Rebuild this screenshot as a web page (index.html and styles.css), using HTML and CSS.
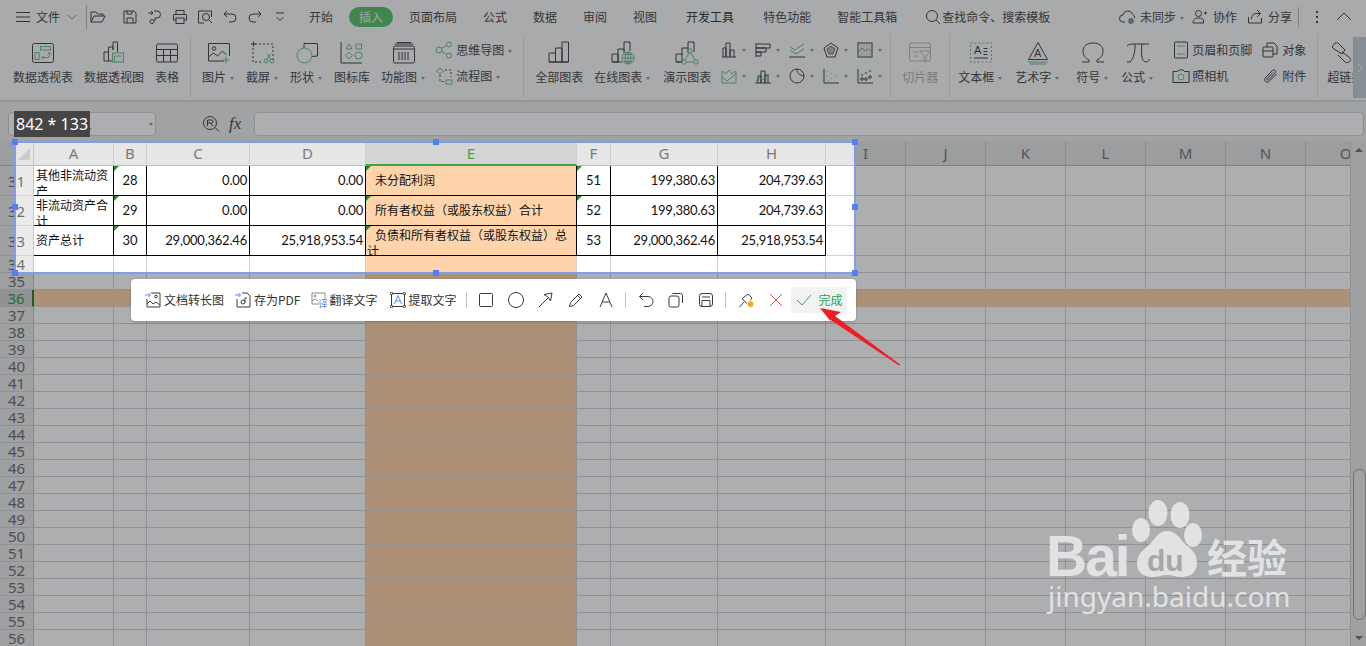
FILE: index.html
```html
<!DOCTYPE html>
<html lang="zh-CN">
<head>
<meta charset="utf-8">
<title>WPS 表格</title>
<link rel="stylesheet" href="styles.css">
</head>
<body>
<div class="app">
  <header class="topbar">
    <svg class="s16 menu" viewBox="0 0 16 16"><path d="M1 3.500h14M1 8h14M1 12.500h14"/></svg>
    <span class="file">文件</span>
    <svg class="s10 chev" viewBox="0 0 10 10"><path d="M1 3l4 4 4-4"/></svg>
    <span class="vsep"></span>
    <div class="quick">
      <svg class="s16" viewBox="0 0 16 16"><path d="M1 13V3h5l1.500 2H13v2M1 13l3-6h11l-3 6z"/></svg>
      <svg class="s16" viewBox="0 0 16 16"><path d="M2 2h10l2 2v10H2zM5 14V9h6v5M5 2v3h5V2"/></svg>
      <svg class="s16" viewBox="0 0 16 16"><path d="M1 4h5M4 2l2 2-2 2M7 2h3a3.500 3.500 0 0 1 0 7H8v3"/><circle cx="5" cy="12.500" r="2"/></svg>
      <svg class="s16" viewBox="0 0 16 16"><rect x="4" y="1.500" width="8" height="4"/><path d="M4 11H1.500V5.500h13V11H12"/><rect x="4" y="9" width="8" height="5.500"/></svg>
      <svg class="s16" viewBox="0 0 16 16"><path d="M7 14H1.500V2h13v6"/><circle cx="9" cy="8" r="3.500"/><path d="M11.500 10.500L15 14"/></svg>
      <svg class="s16" viewBox="0 0 16 16"><path d="M5 2L2 5l3 3M2 5h8a3.500 3.500 0 0 1 0 8H7"/></svg>
      <svg class="s16" viewBox="0 0 16 16"><path d="M11 2l3 3-3 3M14 5H6a3.500 3.500 0 0 0 0 8h3"/></svg>
      <svg class="s16" viewBox="0 0 16 16"><path d="M4 4h8M4.500 8L8 11.500 11.500 8"/></svg>
    </div>
    <nav class="tabs">
      <span>开始</span><span class="pill">插入</span><span>页面布局</span><span>公式</span><span>数据</span><span>审阅</span><span>视图</span><span class="m3 dark">开发工具</span><span class="m3">特色功能</span><span>智能工具箱</span>
    </nav>
    <div class="search">
      <svg class="s16" viewBox="0 0 16 16"><circle cx="7" cy="7" r="5.500"/><path d="M11 11l4 4"/></svg>
      <span>查找命令、搜索模板</span>
    </div>
    <div class="account">
      <svg class="s16 w17" viewBox="0 0 17 16"><path d="M6 13H4a3.500 3.500 0 0 1 0-7 5 5 0 0 1 9.500-1 4 4 0 0 1 2 4"/><circle class="solid" cx="12" cy="12" r="3.500"/></svg>
      <span class="acct-t sync">未同步<i class="cr"></i></span>
      <svg class="s16 mr5" viewBox="0 0 16 16"><circle cx="6.500" cy="4.500" r="3"/><path d="M1 14c0-4 3-5 5.500-5s4 .5 5 2v3zM12 4h3M13.500 2.500v3"/></svg>
      <span class="acct-t gap11">协作</span>
      <svg class="s16 mr5" viewBox="0 0 16 16"><path d="M1.500 8v6h13V9M10 1l3.500 3.500L10 8M13 4.500H9C6 4.500 4.500 7 4.500 10"/></svg>
      <span class="acct-t">分享</span>
      <span class="vsep short"></span>
      <span class="dots"><i></i><i></i><i></i></span>
      <svg class="s16 up" viewBox="0 0 16 16"><path d="M1 11l7-7 7 7"/></svg>
    </div>
  </header>

  <section class="ribbon">
    <div class="big"><svg class="s24" viewBox="0 0 24 24"><rect x="1.500" y="2.500" width="21" height="19" rx="2"/><rect class="g" x="9.500" y="5.500" width="10" height="3.500"/><rect class="g" x="4" y="11.500" width="4" height="7"/><path class="g" d="M11 16.500h5.500a2 2 0 0 0 2-2V12M16.500 13.500l2-2 2 2M12.500 15l-1.500 1.500 1.500 1.500"/></svg><span>数据透视表</span></div>
    <div class="big"><svg class="s24" viewBox="0 0 24 24"><path d="M2 20V11h4.500v9zM6.500 20V6H11v3M11 9V1h4.500v10"/><rect class="g" x="10.500" y="12" width="11" height="9"/><path class="g" d="M12.500 21v-6h7"/><path d="M6.500 20H10"/></svg><span>数据透视图</span></div>
    <div class="big"><svg class="s24" viewBox="0 0 24 24"><rect x="1.500" y="3" width="21" height="18" rx="1.500"/><path d="M1.500 8.500h21M1.500 14.500h21M8.500 8.500V21M15.500 8.500V21"/></svg><span>表格</span></div>
    <span class="rsep"></span>
    <div class="big"><svg class="s24" viewBox="0 0 24 24"><path d="M17 20H1.500V2.500h21V15"/><circle cx="7" cy="7.500" r="1.800"/><path d="M1.500 16l5-4 4 3 5-5 4 4"/><path class="g" d="M19 15.500v7M15.500 19h7"/></svg><span>图片<i class="cr"></i></span></div>
    <div class="big"><svg class="s24" viewBox="0 0 24 24"><path class="dash" d="M4 3h18v16M2 7v14h10"/><path d="M0 3h5M2.500 .5v5"/><circle class="g" cx="15" cy="20" r="2"/><circle class="g" cx="21" cy="20" r="2"/><path class="g" d="M16 18.500l4-6M20 18.500l-4-6"/></svg><span>截屏<i class="cr"></i></span></div>
    <div class="big"><svg class="s24" viewBox="0 0 24 24"><path d="M9 2.500h13.500V15l-5.500 .5"/><path d="M9 2.500V7"/><circle class="g" cx="9.500" cy="14.500" r="7.500"/></svg><span>形状<i class="cr"></i></span></div>
    <div class="big"><svg class="s24" viewBox="0 0 24 24"><path d="M1 1v21h21"/><path class="g" d="M9 3l3 5H6zM16 3h5.500v5H16zM9 11l3.500 3.500L9 18l-3.500-3.500z"/><circle class="g" cx="18.500" cy="14.500" r="3.500"/></svg><span>图标库</span></div>
    <div class="big"><svg class="s24" viewBox="0 0 24 24"><rect x="1.500" y="5" width="21" height="17" rx="1.500"/><path d="M3 3h18M5 1.500h14M1.500 8h21M7 11v8M10 11v8M13 11v8M16 11v8"/></svg><span>功能图<i class="cr"></i></span></div>
    <div class="smalls m-2">
      <div class="sm"><svg class="s18" viewBox="0 0 18 18"><circle class="g" cx="4" cy="9" r="3"/><circle class="g" cx="14" cy="3.500" r="2.500"/><circle class="g" cx="14" cy="14.500" r="2.500"/><path class="g" d="M6.500 7.500l5-3M6.500 10.500l5 3"/></svg><span>思维导图<i class="cr"></i></span></div>
      <div class="sm"><svg class="s18" viewBox="0 0 18 18"><path class="g" d="M5 1l3.500 3L5 7 1.500 4z"/><rect class="g" x="11" y="13" width="6" height="4"/><path class="dash" d="M10 3h6v7M5 8v6.500h5"/></svg><span>流程图<i class="cr"></i></span></div>
    </div>
    <span class="rsep ml7"></span>
    <div class="big"><svg class="s24" viewBox="0 0 24 24"><path d="M2 21v-9h6.500v9zM8.500 21V7H15v14zM15 21V1h6.500v20zM2 21h19.500"/></svg><span>全部图表</span></div>
    <div class="big"><svg class="s24" viewBox="0 0 24 24"><path d="M1 21v-8h6v8zM7 21V8h6v4M13 10V1h6v9M1 21h10"/><circle class="g" cx="17" cy="17" r="6"/><path class="g" d="M11 17h12M17 11v12M13 13.500h8M13 20.500h8M17 11c-4 4-4 8 0 12M17 11c4 4 4 8 0 12"/></svg><span>在线图表<i class="cr"></i></span></div>
    <div class="big ml1"><svg class="s24" viewBox="0 0 24 24"><path d="M1 21v-8h6v8zM7 14V7h6v5M13 7V1h6v10M1 21h5"/><circle class="g" cx="15" cy="10" r="2.200"/><circle class="g" cx="9" cy="21" r="2.200"/><circle class="g" cx="21" cy="21" r="2.200"/><path class="g" d="M14 12l-4 7M16 12l4 7M11 21h8"/></svg><span>演示图表</span></div>
    <div class="charts">
      <div class="ch"><svg class="s16" viewBox="0 0 16 16"><path d="M1 15h14M2 15V6h3v9M5 15V1h4v14M9 15V8h4v7"/></svg><i class="cr"></i></div>
      <div class="ch"><svg class="s16" viewBox="0 0 16 16"><path d="M1 1v14M1 2h14v4H1M1 6h10v4H1M1 10h5v4H1"/></svg><i class="cr"></i></div>
      <div class="ch"><svg class="s16" viewBox="0 0 16 16"><path class="g" d="M1 5l5 3 4-3 5-3M1 8l6 4 8-5"/><path d="M0 15h16"/></svg><i class="cr"></i></div>
      <div class="ch"><svg class="s16" viewBox="0 0 16 16"><path d="M8 1l7 5-3 9H4L1 6z"/><path class="solid-t" d="M8 4l4 3-2 5H6L4 7z"/></svg><i class="cr"></i></div>
      <div class="ch"><svg class="s16" viewBox="0 0 16 16"><rect x="1" y="1" width="14" height="14"/><path class="g" d="M1 10l4-4 3 3 3-2 4 3"/><path class="thin" d="M4 1v14M7 1v14M10 1v14M13 1v14"/></svg><i class="cr"></i></div>
      <div class="ch"><svg class="s16" viewBox="0 0 16 16"><path class="g" d="M1 15V3l4 3 3-4 3 4 4-3v12zM1 9l5 4 9-7"/></svg><i class="cr"></i></div>
      <div class="ch"><svg class="s16" viewBox="0 0 16 16"><path d="M0 15h16M3 15V8h3v7M6 15V3h4v12M10 15V7h3v8"/><path class="g" d="M1 13l4-3 3 2 6-6"/></svg><i class="cr"></i></div>
      <div class="ch"><svg class="s16" viewBox="0 0 16 16"><circle cx="8" cy="8" r="7"/><path d="M8 1c0 4 2 6 7 7"/></svg><i class="cr"></i></div>
      <div class="ch"><svg class="s16" viewBox="0 0 16 16"><path d="M1 1v14h15"/><path class="g dash" d="M4 3v1M4 8v1M8 5v1M8 10v1M12 8v1M5 12v1"/></svg><i class="cr"></i></div>
      <div class="ch"><svg class="s16" viewBox="0 0 16 16"><path d="M1 1v14h15"/><circle class="solid-g" cx="5" cy="7" r="1.300"/><circle class="solid-g" cx="9" cy="5" r="1.300"/><circle class="solid-g" cx="13" cy="3" r="1.300"/><circle cx="5" cy="11" r="1.300"/><circle cx="9" cy="11" r="1.300"/><circle cx="13" cy="9" r="1.300"/></svg><i class="cr"></i></div>
    </div>
    <span class="rsep"></span>
    <div class="big off"><svg class="s24" viewBox="0 0 24 24"><rect x="1.500" y="2" width="21" height="18" rx="1.500"/><path d="M1.500 6.500h21M5 11h6M5 15h5M12 10h10l-4 5v6l-2-1v-5z"/></svg><span>切片器</span></div>
    <span class="rsep"></span>
    <div class="big ml-2b"><svg class="s24" viewBox="0 0 24 24"><rect class="g dash" x="1.500" y="2" width="21" height="19"/><text class="gl" x="5" y="13">A</text><path d="M14.500 7.500h4M14.500 10.500h4M14.500 13.500h4M5 17h14"/></svg><span>文本框<i class="cr"></i></span></div>
    <div class="big ml1"><svg class="s24" viewBox="0 0 24 24"><path d="M12 1.500L2.500 18.500h19z"/><text class="gl" x="8" y="16">A</text><path class="g" d="M2 21h20M4 23h16"/></svg><span>艺术字<i class="cr"></i></span></div>
    <div class="big ml3"><svg class="s24" viewBox="0 0 24 24"><path d="M1 21h7v-2C4 17 2 14 2 10c0-5 4-8 10-8s10 3 10 8c0 4-2 7-6 9v2h7"/></svg><span>符号<i class="cr"></i></span></div>
    <div class="big ml1"><svg class="s24" viewBox="0 0 24 24"><path d="M1 5c2-2 4-2 6-2h16M9 3c0 8-1 14-5 18H1M16 3c-1 8-1 18 4 18 2 0 3-1 3-3"/></svg><span>公式<i class="cr"></i></span></div>
    <div class="smalls ml7b">
      <div class="sm tight"><svg class="s18" viewBox="0 0 18 18"><rect x="2.500" y="1" width="13" height="16" rx="1"/><path class="g" d="M5 5h8M5 13h8"/></svg><span>页眉和页脚</span></div>
      <div class="sm tight"><svg class="s18" viewBox="0 0 18 18"><path d="M1 4.500h4.500L7 3h4l1.500 1.500H17v11H1z"/><circle class="g" cx="9" cy="10" r="3"/></svg><span>照相机</span></div>
    </div>
    <div class="smalls ml-2">
      <div class="sm"><svg class="s16" viewBox="0 0 16 16"><path d="M5 5V1h7l3 3v8h-4"/><rect x="1" y="5" width="10" height="10" rx="1"/><path d="M1 9h10"/></svg><span>对象</span></div>
      <div class="sm"><svg class="s16" viewBox="0 0 16 16"><path d="M14.500 6L7 13.500c-2.200 2.200-6-1.300-3.700-3.700L10.500 2.500c1.700-1.700 4.300 .7 2.600 2.600L6.500 11.700c-1 1-2.300-.3-1.300-1.300L11 4.500"/></svg><span>附件</span></div>
    </div>
    <span class="rsep"></span>
    <div class="big clip"><svg class="s24" viewBox="0 0 24 24"><path d="M2 6l3-4c2-1 3 0 4 1l6 6-3 4-8-5zM12 11l7 5c2 2 2 4 0 5-2 1-3 1-4 0l-7-7"/></svg><span>超链接</span></div>
    <div class="rnext"><svg class="s10" viewBox="0 0 10 10"><path d="M3 1l4 4-4 4"/></svg></div>
  </section>

  <section class="fbar">
    <div class="namebox"><span>E31</span><i class="cr"></i></div>
    <svg class="s18 fx-s" viewBox="0 0 18 18"><circle cx="8" cy="8" r="6.500"/><path d="M5.500 11V5h4a1.500 1.500 0 0 1 0 3h-4M8.500 8l2.500 3M13 12.500l4 4"/></svg>
    <span class="fx">fx</span>
    <div class="finput"></div>
  </section>

  <section class="sheet">
    <div class="grid">
      <div class="row hdr"><b class="rh corner"></b><i>A</i><i>B</i><i>C</i><i>D</i><i>E</i><i>F</i><i>G</i><i>H</i><i>I</i><i>J</i><i>K</i><i>L</i><i>M</i><i>N</i><i>O</i></div>
      <div class="row tall"><b class="rh">31</b><i class="bd top">其他非流动资产</i><i class="bd c tri">28</i><i class="bd n">0.00</i><i class="bd n">0.00</i><i class="bd in tri">未分配利润</i><i class="bd c tri">51</i><i class="bd n">199,380.63</i><i class="bd n">204,739.63</i><i></i><i></i><i></i><i></i><i></i><i></i><i></i></div>
      <div class="row tall"><b class="rh">32</b><i class="bd top">非流动资产合计</i><i class="bd c tri">29</i><i class="bd n">0.00</i><i class="bd n">0.00</i><i class="bd in tri">所有者权益（或股东权益）合计</i><i class="bd c tri">52</i><i class="bd n">199,380.63</i><i class="bd n">204,739.63</i><i></i><i></i><i></i><i></i><i></i><i></i><i></i></div>
      <div class="row tall"><b class="rh">33</b><i class="bd">资产总计</i><i class="bd c tri">30</i><i class="bd n">29,000,362.46</i><i class="bd n">25,918,953.54</i><i class="bd in top tri">负债和所有者权益（或股东权益）总计</i><i class="bd c">53</i><i class="bd n">29,000,362.46</i><i class="bd n">25,918,953.54</i><i></i><i></i><i></i><i></i><i></i><i></i><i></i></div>
      <div class="row"><b class="rh">34</b><i></i><i></i><i></i><i></i><i></i><i></i><i></i><i></i><i></i><i></i><i></i><i></i><i></i><i></i><i></i></div>
      <div class="row"><b class="rh">35</b><i></i><i></i><i></i><i></i><i></i><i></i><i></i><i></i><i></i><i></i><i></i><i></i><i></i><i></i><i></i></div>
      <div class="row hl"><b class="rh">36</b><i></i><i></i><i></i><i></i><i></i><i></i><i></i><i></i><i></i><i></i><i></i><i></i><i></i><i></i><i></i></div>
      <div class="row"><b class="rh">37</b><i></i><i></i><i></i><i></i><i></i><i></i><i></i><i></i><i></i><i></i><i></i><i></i><i></i><i></i><i></i></div>
      <div class="row"><b class="rh">38</b><i></i><i></i><i></i><i></i><i></i><i></i><i></i><i></i><i></i><i></i><i></i><i></i><i></i><i></i><i></i></div>
      <div class="row"><b class="rh">39</b><i></i><i></i><i></i><i></i><i></i><i></i><i></i><i></i><i></i><i></i><i></i><i></i><i></i><i></i><i></i></div>
      <div class="row"><b class="rh">40</b><i></i><i></i><i></i><i></i><i></i><i></i><i></i><i></i><i></i><i></i><i></i><i></i><i></i><i></i><i></i></div>
      <div class="row"><b class="rh">41</b><i></i><i></i><i></i><i></i><i></i><i></i><i></i><i></i><i></i><i></i><i></i><i></i><i></i><i></i><i></i></div>
      <div class="row"><b class="rh">42</b><i></i><i></i><i></i><i></i><i></i><i></i><i></i><i></i><i></i><i></i><i></i><i></i><i></i><i></i><i></i></div>
      <div class="row"><b class="rh">43</b><i></i><i></i><i></i><i></i><i></i><i></i><i></i><i></i><i></i><i></i><i></i><i></i><i></i><i></i><i></i></div>
      <div class="row"><b class="rh">44</b><i></i><i></i><i></i><i></i><i></i><i></i><i></i><i></i><i></i><i></i><i></i><i></i><i></i><i></i><i></i></div>
      <div class="row"><b class="rh">45</b><i></i><i></i><i></i><i></i><i></i><i></i><i></i><i></i><i></i><i></i><i></i><i></i><i></i><i></i><i></i></div>
      <div class="row"><b class="rh">46</b><i></i><i></i><i></i><i></i><i></i><i></i><i></i><i></i><i></i><i></i><i></i><i></i><i></i><i></i><i></i></div>
      <div class="row"><b class="rh">47</b><i></i><i></i><i></i><i></i><i></i><i></i><i></i><i></i><i></i><i></i><i></i><i></i><i></i><i></i><i></i></div>
      <div class="row"><b class="rh">48</b><i></i><i></i><i></i><i></i><i></i><i></i><i></i><i></i><i></i><i></i><i></i><i></i><i></i><i></i><i></i></div>
      <div class="row"><b class="rh">49</b><i></i><i></i><i></i><i></i><i></i><i></i><i></i><i></i><i></i><i></i><i></i><i></i><i></i><i></i><i></i></div>
      <div class="row"><b class="rh">50</b><i></i><i></i><i></i><i></i><i></i><i></i><i></i><i></i><i></i><i></i><i></i><i></i><i></i><i></i><i></i></div>
      <div class="row"><b class="rh">51</b><i></i><i></i><i></i><i></i><i></i><i></i><i></i><i></i><i></i><i></i><i></i><i></i><i></i><i></i><i></i></div>
      <div class="row"><b class="rh">52</b><i></i><i></i><i></i><i></i><i></i><i></i><i></i><i></i><i></i><i></i><i></i><i></i><i></i><i></i><i></i></div>
      <div class="row"><b class="rh">53</b><i></i><i></i><i></i><i></i><i></i><i></i><i></i><i></i><i></i><i></i><i></i><i></i><i></i><i></i><i></i></div>
      <div class="row"><b class="rh">54</b><i></i><i></i><i></i><i></i><i></i><i></i><i></i><i></i><i></i><i></i><i></i><i></i><i></i><i></i><i></i></div>
      <div class="row"><b class="rh">55</b><i></i><i></i><i></i><i></i><i></i><i></i><i></i><i></i><i></i><i></i><i></i><i></i><i></i><i></i><i></i></div>
      <div class="row"><b class="rh">56</b><i></i><i></i><i></i><i></i><i></i><i></i><i></i><i></i><i></i><i></i><i></i><i></i><i></i><i></i><i></i></div>
    </div>
    <div class="vscroll">
      <i class="sc-up"></i>
      <div class="thumb"></div>
      <i class="sc-down"></i>
    </div>
  </section>

  <div class="capture">
    <i class="hd h1"></i><i class="hd h2"></i><i class="hd h3"></i><i class="hd h4"></i><i class="hd h5"></i><i class="hd h6"></i><i class="hd h7"></i><i class="hd h8"></i>
  </div>
  <div class="sizelabel">842 * 133</div>

  <div class="shotbar">
    <div class="act"><svg class="s16" viewBox="0 0 16 16"><path class="b" d="M0 3h5M3.500 1L5.500 3 3.500 5"/><path d="M6 1h9v14H2V7M2 12l3-3 3 3 3-2 4 3"/><circle cx="11" cy="4.500" r="1.300"/></svg><span>文档转长图</span></div>
    <div class="act"><svg class="s16" viewBox="0 0 16 16"><path class="b" d="M0 3h5M3.500 1L5.500 3 3.500 5"/><path d="M7 1h5l3 3v11H2V7"/><circle cx="8" cy="10" r="2"/><path d="M10 10V6h2"/></svg><span>存为PDF</span></div>
    <div class="act wide"><svg class="s16" viewBox="0 0 16 16"><path class="lg" d="M8 12H1V1h13v6M1 9l3-2 3 2"/><circle class="lg" cx="4" cy="4" r="1"/><text class="gl-b" x="7" y="16">译</text></svg><span>翻译文字</span></div>
    <div class="act"><svg class="s16" viewBox="0 0 16 16"><rect x="1.500" y="1.500" width="13" height="13"/><circle class="w" cx="1.500" cy="1.500" r="1.200"/><circle class="w" cx="14.500" cy="1.500" r="1.200"/><circle class="w" cx="1.500" cy="14.500" r="1.200"/><circle class="w" cx="14.500" cy="14.500" r="1.200"/><path class="b" d="M4.500 12L8 3.500 11.500 12M5.800 9h4.400"/></svg><span>提取文字</span></div>
    <span class="bsep"></span>
    <div class="tools">
      <svg class="s16" viewBox="0 0 16 16"><rect x="1.500" y="1.500" width="13" height="13" rx="1"/></svg>
      <svg class="s16" viewBox="0 0 16 16"><circle cx="8" cy="8" r="7.500"/></svg>
      <svg class="s16" viewBox="0 0 16 16"><path d="M1 15L10.500 5.500M6 2.500l8-1.500-1.500 8-2-3.500z"/></svg>
      <svg class="s16" viewBox="0 0 16 16"><path d="M1.500 14.500l1-4L11 2l3 3-8.500 8.500zM9.500 3.500l3 3"/></svg>
      <svg class="s16" viewBox="0 0 16 16"><path d="M2 15L8 1l6 14M4.200 10h7.600"/></svg>
    </div>
    <span class="bsep m11"></span>
    <div class="tools">
      <svg class="s16" viewBox="0 0 16 16"><path d="M5 1L1.500 4.500 5 8M1.500 4.500H10a4.500 4.500 0 0 1 0 10H6"/></svg>
      <svg class="s16" viewBox="0 0 16 16"><rect x="1" y="4" width="10" height="11" rx="2"/><path d="M4.500 1.500h8a2 2 0 0 1 2 2V11"/></svg>
      <svg class="s16" viewBox="0 0 16 16"><rect x="1.500" y="1.500" width="13" height="13" rx="2.500"/><path d="M4 14.500V8.500h8v6M4 5h8"/></svg>
    </div>
    <span class="bsep m11"></span>
    <svg class="s16 pin" viewBox="0 0 16 16"><path d="M6 5l4-3 4 4-3 4c0 1-.5 2-1 2.500L4 7c.5-.5 1-1 2-2zM6.500 9.500L1.500 15"/><circle class="or" cx="12.500" cy="12" r="3.500"/></svg>
    <svg class="s16 close" viewBox="0 0 16 16"><path d="M2 2l12 12M14 2L2 14"/></svg>
    <div class="done"><svg class="s16" viewBox="0 0 16 16"><path d="M1 8l5 5L15 3"/></svg><span>完成</span></div>
  </div>

  <svg class="arrow" viewBox="0 0 90 70"><polygon points="10,8 31,12 25,16 90,64.500 89,65.500 20,19.500 22,23"/></svg>

  <svg class="mark" viewBox="0 0 260 130">
    <text class="m-bai" x="-4" y="81">Bai</text>
    <ellipse cx="108" cy="18" rx="9.500" ry="13"/><ellipse cx="130" cy="20" rx="9.500" ry="13"/><ellipse cx="91" cy="35" rx="9" ry="12"/><ellipse cx="143" cy="40" rx="9" ry="12"/>
    <path d="M117 36c8 0 12 6 17 12 6 5 13 10 13 20 0 11-9 14-15 14-6 0-10-2-15-2s-9 2-15 2c-7 0-15-4-15-13 0-10 7-15 13-20 5-6 9-13 17-13z"/>
    <text class="m-du" x="97" y="76">du</text>
    <text class="m-jy" x="157" y="78">经验</text>
    <text class="m-url" x="-2" y="112">jingyan.baidu.com</text>
  </svg>
</div>
</body>
</html>
```
FILE: styles.css
```css
* { box-sizing: border-box; }
html, body { margin: 0; height: 100%; overflow: hidden; }
body { font: 12px/16px "Noto Sans CJK SC", "Noto Sans", sans-serif; color: #505050; background: #fff; }
.app { position: relative; width: 1366px; height: 646px; overflow: hidden; display: flex; flex-direction: column; }

svg { flex: none; display: block; fill: none; stroke: #4a4a4a; stroke-width: 1; }
.s10 { width: 10px; height: 10px; }
.s16 { width: 16px; height: 16px; }
.s18 { width: 18px; height: 18px; }
.s24 { width: 24px; height: 24px; }
.w17 { width: 17px; }
svg .g { stroke: #72bd8e; }
svg .dash { stroke-dasharray: 2 2; }
svg .thin { stroke: #999; stroke-width: .6; }
svg .solid { fill: #8a96a8; stroke: #fff; }
svg .solid-t { fill: #bbb; stroke: #777; }
svg .solid-g { fill: #72bd8e; stroke: none; }
svg .gl { font: 11px "Liberation Sans", sans-serif; fill: #4a4a4a; stroke: none; }

.cr { display: inline-block; width: 0; height: 0; margin-left: 4px; margin-right: 1px; border: 2.5px solid transparent; border-top: 3px solid #9a9a9a; border-bottom: 0; vertical-align: 2px; }

/* top bar */
.topbar { height: 34px; flex: none; display: flex; align-items: center; padding-left: 15px; background: #f8f9fa; }
.menu { margin-right: 5px; }
.file { width: 24px; }
.chev { margin-left: 7px; stroke: #999; }
.vsep { width: 1px; height: 24px; background: #bdbdbd; margin-left: 9px; }
.quick { display: flex; gap: 9px; margin-left: 3px; }
.quick svg:nth-child(1) { margin-right: 7px; }
.tabs { display: flex; gap: 26px; margin-left: 21px; align-items: center; white-space: nowrap; }
.tabs .pill { background: #5cc46a; color: #f0f0f0; height: 20px; line-height: 20px; padding: 0 10px; border-radius: 10px; margin: 0 -10px; }
.tabs .m3 { margin-left: 3px; }
.tabs .dark { color: #3c3c3c; }
.search { display: flex; align-items: center; gap: 1px; margin-left: 28px; }
.account { display: flex; align-items: center; margin-left: auto; padding-right: 14px; }
.acct-t { margin-left: 4px; margin-right: 14px; white-space: nowrap; }
.acct-t.sync { margin-right: 7px; }
.acct-t.gap11 { margin-right: 10px; }
.mr5 { margin-right: 1px; }
.short { height: 20px; margin-left: -8px; }
.dots { display: flex; flex-direction: column; gap: 3px; margin: 0 18px 0 17px; }
.dots i { width: 2px; height: 2px; background: #4a4a4a; }

/* ribbon */
.ribbon { height: 66px; flex: none; display: flex; align-items: flex-start; gap: 11px; padding-left: 13px; background: #f8f9fa; overflow: hidden; position: relative; box-shadow: 0 1px 2px rgba(0,0,0,.15); z-index: 1; }
.big { display: flex; flex-direction: column; align-items: center; padding-top: 7px; white-space: nowrap; flex: none; }
.big span { margin-top: 4px; display: block; }
.big.off { color: #b4b4b4; }
.big.off svg { stroke: #bcbcbc; }
.rsep { width: 1px; height: 62px; margin-top: 2px; background: #e2e2e2; flex: none; }
.smalls { display: flex; flex-direction: column; padding-top: 3px; flex: none; white-space: nowrap; }
.sm { display: flex; align-items: center; gap: 3px; height: 26px; }
.sm.tight { gap: 2px; }
.m-2 { margin-left: -2px; }
.ml7 { margin-left: -1px; }
.ml1 { margin-left: 1px; }
.ml3 { margin-left: 5px; }
.ml-2b { margin-left: -3px; }
.ml7b { margin-left: 7px; }
.ml-2 { margin-left: -1px; }
.ml-2 .sm { gap: 4px; }
.charts { display: grid; grid-template-columns: repeat(5, 34px); grid-auto-rows: 26px; padding-top: 3px; margin-right: -12px; margin-left: -1px; flex: none; }
.ch { display: flex; align-items: center; }
.ch .cr { margin-left: 5px; }
.clip { width: 28px; overflow: hidden; margin-left: -2px; align-items: flex-start; }
.clip svg { margin-left: 3px; }
.rnext { position: absolute; right: 0; top: 3px; width: 13px; height: 61px; background: #c8ced6; display: flex; align-items: center; justify-content: center; }
.rnext svg { stroke: #fff; }

/* formula bar */
.fbar { height: 41px; flex: none; display: flex; align-items: flex-start; padding: 12px 2px 0 8px; background: #eceded; }
.namebox { width: 148px; height: 24px; background: #fff; border: 1px solid #d0d1d3; border-radius: 4px; padding: 3px 0 0 62px; display: flex; justify-content: space-between; }
.namebox .cr { margin: 7px 2px 0 0; }
.fx-s { margin: 3px 0 0 46px; }
.fx { width: 34px; padding-left: 9px; font: italic 17px/24px "Liberation Serif", serif; color: #505050; }
.finput { flex: 1; height: 24px; background: #fff; border: 1px solid #d0d1d3; border-radius: 4px; }

/* sheet */
.sheet { flex: 1; display: flex; min-height: 0; }
.grid { flex: 1; min-width: 0; overflow: hidden; }
.row { display: grid; grid-template-columns: 34px 80px 33px 103px 116px 211px 34px 107px 108px 80px 80px 80px 80px 80px 80px 80px; height: 17px; }
.row i { font-style: normal; border-right: 1px solid #d2d3d5; border-bottom: 1px solid #d2d3d5; min-width: 0; overflow: hidden; display: flex; align-items: center; color: #111; position: relative; }
.row > i:nth-child(6) { background: #ffd4aa; border-bottom-color: #e8d6c4; }
.rh { font: 400 15px/16px "Noto Sans", sans-serif; color: #737373; background: #ebebeb; border-right: 1px solid #c6c6c6; border-bottom: 1px solid #d4d4d4; display: flex; align-items: center; justify-content: center; }
.hdr { height: 25px; }
.hdr i, .hdr > i:nth-child(6) { font: 15px/16px "Noto Sans", sans-serif; color: #7a7a7a; background: #e6e6e6; border-right: 1px solid #cfcfcf; border-bottom: 1px solid #bdbdbd; justify-content: center; }
.hdr > i:nth-child(6) { background: #d5d5d5; color: #41a541; border-bottom: 2px solid #3fa548; }
.corner { position: relative; background: #e6e6e6; border-bottom: 1px solid #bdbdbd; }
.corner::after { content: ""; position: absolute; left: 18px; bottom: 5px; border-style: solid; border-width: 0 0 12px 12px; border-color: transparent transparent #cbcbcb transparent; }
.tall { height: 30px; }
.tall i { background: #fff; }
.bd { border-right: 1px solid #000 !important; border-bottom: 1px solid #000 !important; padding: 0 2px 2px; }
.bd.top { align-items: flex-start; padding-top: 1px; padding-bottom: 0; }
.bd.c { justify-content: center; font: 13px/16px Lato, sans-serif; }
.bd.n { justify-content: flex-end; font: 13px/16px Lato, sans-serif; letter-spacing: -.2px; }
.bd.in { padding-left: 9px; }
.bd.in.top { display: block; padding: 1px 4px 0 1px; text-indent: 8px; }
.tri::before { content: ""; position: absolute; left: 0; top: 0; border-style: solid; border-width: 5px 5px 0 0; border-color: #1f8f2a transparent transparent transparent; }
.hl i, .hl > i:nth-child(6) { background: #ffd4aa; border-right-color: transparent; border-bottom-color: #e8d6c4; }
.hl .rh { background: #d6d6d6; color: #3d9a55; border-right: 2px solid #1f8f2a; }
.vscroll { width: 16px; flex: none; background: #ebebeb; border-left: 1px solid #d6d6d6; position: relative; display: flex; flex-direction: column; align-items: center; }
.thumb { position: absolute; top: 328px; left: 2px; width: 13px; height: 151px; border: 1px solid #a6a6a6; border-radius: 6px; background: #ececec; }
.sc-up, .sc-down { position: absolute; width: 0; height: 0; border: 4px solid transparent; }
.sc-up { top: 7px; border-top: 0; border-bottom: 4px solid #777; }
.sc-down { bottom: 6px; border-bottom: 0; border-top: 4px solid #777; }

/* capture overlay */
.capture { position: absolute; left: 14px; top: 141px; width: 842px; height: 133px; z-index: 5; border: 2px solid #7d9cf2; box-shadow: 0 0 0 1500px rgba(0, 3, 8, .32); }
.hd { position: absolute; width: 6px; height: 6px; background: #4f80f5; }
.h1 { left: -4px; top: -4px; } .h2 { left: 417px; top: -4px; } .h3 { right: -4px; top: -4px; }
.h4 { left: -4px; top: 61px; } .h5 { right: -4px; top: 61px; }
.h6 { left: -4px; bottom: -4px; } .h7 { left: 417px; bottom: -4px; } .h8 { right: -4px; bottom: -4px; }
.sizelabel { position: absolute; left: 14px; top: 111px; width: 76px; height: 26px; z-index: 6; background: #454545; color: #fff; font: 16px/26px "Noto Sans", sans-serif; padding-left: 2px; white-space: nowrap; }

.shotbar { position: absolute; left: 131px; top: 279px; width: 725px; height: 42px; z-index: 6; background: #fff; border-radius: 4px; display: flex; align-items: center; padding-left: 14px; box-shadow: 0 1px 3px rgba(0,0,0,.2); color: #333; white-space: nowrap; }
.shotbar svg { stroke: #3c3c3c; }
.shotbar svg .b { stroke: #5b8cf0; }
.shotbar svg .lg { stroke: #8a8a8a; }
.shotbar svg .w { fill: #fff; stroke: #333; }
.shotbar svg .or { fill: #f5a623; stroke: #fff; }
.shotbar svg .gl-b { font: 10px "Noto Sans CJK SC", sans-serif; fill: #5b8cf0; stroke: none; }
.act { display: flex; align-items: center; gap: 3px; margin-right: 10px; }
.act:first-child { margin-right: 11px; }
.act.wide { margin-right: 12px; }
.bsep { width: 1px; height: 16px; background: #c4c4c4; flex: none; margin: 0 11px 0 -1px; }
.bsep.m11 { margin: 0 12px 0 11px; }
.tools { display: flex; gap: 14px; }
.pin { margin-right: 14px; }
.close { margin-right: 7px; }
.shotbar svg.close { stroke: #e8504f; }
.done { width: 56px; height: 26px; background: #f2f2f2; border-radius: 3px; display: flex; align-items: center; padding-left: 5px; gap: 7px; color: #22a45d; }
.shotbar .done svg { stroke: #2aa860; }

.arrow { position: absolute; left: 810px; top: 300px; width: 90px; height: 70px; z-index: 7; }
.arrow polygon { fill: #ee1c25; stroke: none; }

.mark { position: absolute; left: 1050px; top: 495px; width: 260px; height: 130px; z-index: 7; fill: #e4e5e7; stroke: none; overflow: visible; opacity: .95; }
.mark text { stroke: none; }
.m-bai { font: 700 57px "Liberation Sans", sans-serif; letter-spacing: -2px; fill: #e4e5e7; }
.m-du { font: 700 30px "Liberation Sans", sans-serif; fill: #a6a7a9; }
.m-jy { font: 700 40px "Noto Sans CJK SC", sans-serif; fill: #e4e5e7; }
.m-url { font: 28px "Noto Sans", sans-serif; fill: #e4e5e7; }
```
